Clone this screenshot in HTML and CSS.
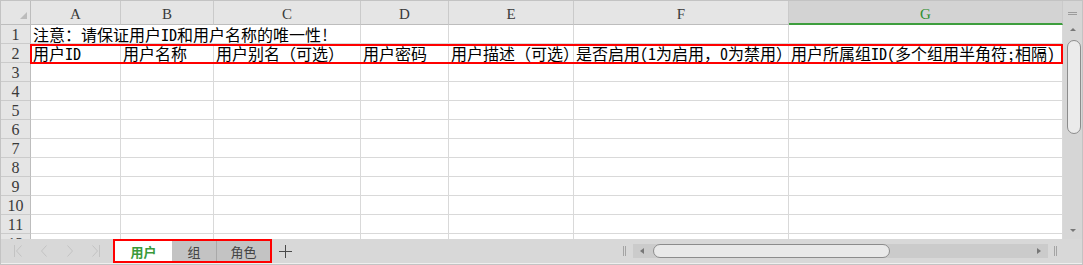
FILE: index.html
```html
<!DOCTYPE html>
<html>
<head>
  <meta charset="utf-8">
  <title>用户导入模板</title>
  <link rel="stylesheet" href="styles.css">
</head>
<body>
  <div class="app">
    <div class="main">
      <div class="grid">
        <!-- column headers -->
        <div class="corner"><span class="tri"></span></div>
        <div class="ch">A</div>
        <div class="ch">B</div>
        <div class="ch">C</div>
        <div class="ch">D</div>
        <div class="ch">E</div>
        <div class="ch">F</div>
        <div class="ch sel">G</div>

        <!-- row 1: note overflows into B and C -->
        <div class="rh">1</div>
        <div class="cell span3">注意：请保证用户ID和用户名称的唯一性!</div>
        <div class="cell"></div><div class="cell"></div><div class="cell"></div><div class="cell"></div>

        <!-- row 2: field names -->
        <div class="rh">2</div>
        <div class="cell">用户ID</div>
        <div class="cell">用户名称</div>
        <div class="cell">用户别名（可选）</div>
        <div class="cell">用户密码</div>
        <div class="cell">用户描述（可选）</div>
        <div class="cell">是否启用(1为启用，0为禁用）</div>
        <div class="cell">用户所属组ID(多个组用半角符;相隔)</div>

        <div class="rh">3</div><div class="cell"></div><div class="cell"></div><div class="cell"></div><div class="cell"></div><div class="cell"></div><div class="cell"></div><div class="cell"></div>
        <div class="rh">4</div><div class="cell"></div><div class="cell"></div><div class="cell"></div><div class="cell"></div><div class="cell"></div><div class="cell"></div><div class="cell"></div>
        <div class="rh">5</div><div class="cell"></div><div class="cell"></div><div class="cell"></div><div class="cell"></div><div class="cell"></div><div class="cell"></div><div class="cell"></div>
        <div class="rh">6</div><div class="cell"></div><div class="cell"></div><div class="cell"></div><div class="cell"></div><div class="cell"></div><div class="cell"></div><div class="cell"></div>
        <div class="rh">7</div><div class="cell"></div><div class="cell"></div><div class="cell"></div><div class="cell"></div><div class="cell"></div><div class="cell"></div><div class="cell"></div>
        <div class="rh">8</div><div class="cell"></div><div class="cell"></div><div class="cell"></div><div class="cell"></div><div class="cell"></div><div class="cell"></div><div class="cell"></div>
        <div class="rh">9</div><div class="cell"></div><div class="cell"></div><div class="cell"></div><div class="cell"></div><div class="cell"></div><div class="cell"></div><div class="cell"></div>
        <div class="rh">10</div><div class="cell"></div><div class="cell"></div><div class="cell"></div><div class="cell"></div><div class="cell"></div><div class="cell"></div><div class="cell"></div>
        <div class="rh">11</div><div class="cell"></div><div class="cell"></div><div class="cell"></div><div class="cell"></div><div class="cell"></div><div class="cell"></div><div class="cell"></div>
        <div class="rh">12</div><div class="cell"></div><div class="cell"></div><div class="cell"></div><div class="cell"></div><div class="cell"></div><div class="cell"></div><div class="cell"></div>
      </div>

      <div class="vscroll">
        <div class="grip-h"></div>
        <div class="arrow-up"></div>
        <div class="vthumb"></div>
        <div class="arrow-down"></div>
      </div>

      <!-- highlight around row 2 -->
      <div class="selbox"></div>
    </div>

    <div class="bar">
      <div class="nav">
        <svg width="10" height="12" viewBox="0 0 10 12"><path d="M1.5 0v12M8.5 0.5L3.5 6l5 5.5" fill="none" stroke="#c3c3c3"/></svg>
        <svg width="10" height="12" viewBox="0 0 10 12"><path d="M7.5 0.5L2.5 6l5 5.5" fill="none" stroke="#c3c3c3"/></svg>
        <svg width="10" height="12" viewBox="0 0 10 12"><path d="M2.5 0.5L7.5 6l-5 5.5" fill="none" stroke="#c3c3c3"/></svg>
        <svg width="10" height="12" viewBox="0 0 10 12"><path d="M1.5 0.5L6.5 6l-5 5.5M8.5 0v12" fill="none" stroke="#c3c3c3"/></svg>
      </div>

      <div class="tabs">
        <div class="tab active">用户</div>
        <div class="tab t2">组</div>
        <div class="tab t3">角色</div>
      </div>

      <svg class="add" width="13" height="13" viewBox="0 0 13 13"><path d="M6.5 0v13M0 6.5h13" stroke="#4a4a4a"/></svg>

      <div class="hscroll">
        <div class="grip-v"></div>
        <div class="track">
          <span class="arrow-left"></span>
          <span class="hthumb"></span>
          <span class="arrow-right"></span>
        </div>
        <div class="grip-v"></div>
      </div>
    </div>
  </div>
</body>
</html>
```

FILE: styles.css
```css
/* spreadsheet frame */
body {
  margin: 0;
  background: #fff;
}

.app {
  width: 1083px;
  height: 265px;
  box-sizing: border-box;
  border: 1px solid #c3c3c3;
  display: flex;
  flex-direction: column;
  overflow: hidden;
}

.main {
  position: relative;
  display: flex;
  height: 238px;
}

.grid {
  display: grid;
  grid-template-columns: 30px 90px 93px 147px 88px 125px 215px 274px;
  grid-template-rows: 24px;
  grid-auto-rows: 19px;
  height: 238px;
  overflow: hidden;
}

.corner,
.ch,
.rh {
  background: #e5e5e5;
  box-sizing: border-box;
  color: #3a3a3a;
  font-family: "Liberation Serif", serif;
}

.corner {
  border-right: 1px solid #bdbdbd;
  border-bottom: 1px solid #bdbdbd;
  display: flex;
  justify-content: flex-end;
  align-items: flex-end;
}

.corner .tri {
  width: 0;
  height: 0;
  border-left: 7px solid transparent;
  border-bottom: 7px solid #bcbcbc;
  margin: 0 3px 5px 0;
}

.ch {
  border-right: 1px solid #cacaca;
  border-bottom: 1px solid #bdbdbd;
  text-align: center;
  font-size: 15px;
  line-height: 26px;
}

.ch.sel {
  background: #d3d3d3;
  color: #2f8f2f;
  border-bottom: 2px solid #3d9e3d;
}

.rh {
  border-right: 1px solid #bdbdbd;
  border-bottom: 1px solid #cbcbcb;
  text-align: center;
  font-size: 16px;
  line-height: 20px;
}

.cell {
  box-sizing: border-box;
  border-right: 1px solid #d9d9d9;
  border-bottom: 1px solid #d9d9d9;
  padding-left: 2px;
  font-family: "Noto Sans Mono CJK SC", "Noto Sans CJK SC", sans-serif;
  font-size: 16px;
  line-height: 18px;
  color: #000;
  white-space: nowrap;
}

.span3 {
  grid-column: span 3;
}

.selbox {
  position: absolute;
  left: 29px;
  top: 43px;
  width: 1033px;
  height: 20px;
  box-sizing: border-box;
  border: 2px solid #f00;
  pointer-events: none;
}

/* vertical scrollbar */
.vscroll {
  width: 19px;
  background: #d6d6d6;
  display: flex;
  flex-direction: column;
  align-items: center;
}

.grip-h {
  width: 9px;
  height: 1px;
  margin-top: 11px;
  border-top: 1px solid #9c9c9c;
  border-bottom: 1px solid #9c9c9c;
}

.arrow-up,
.arrow-down {
  width: 0;
  height: 0;
  border-left: 3px solid transparent;
  border-right: 3px solid transparent;
}

.arrow-up {
  margin-top: 13px;
  border-bottom: 3px solid #777;
}

.arrow-down {
  margin-top: auto;
  margin-bottom: 7px;
  border-top: 3px solid #777;
}

.vthumb {
  width: 14px;
  height: 94px;
  margin-top: 9px;
  margin-left: 2px;
  box-sizing: border-box;
  border: 1px solid #8c8c8c;
  border-radius: 7px;
  background: #ebebeb;
}

/* sheet tabs bar */
.bar {
  height: 25px;
  box-sizing: border-box;
  background: #d8d8d8;
  border-bottom: 1px solid #efefef;
  display: flex;
  align-items: center;
}

.nav {
  width: 112px;
  box-sizing: border-box;
  padding-left: 12px;
  display: flex;
  gap: 16px;
}

.tabs {
  align-self: stretch;
  display: flex;
  border: 2px solid #f00;
  font-family: "Noto Sans CJK SC", sans-serif;
  font-size: 13px;
  color: #444;
}

.tab {
  display: flex;
  align-items: center;
  justify-content: center;
  background: #c3c3c3;
}

.tab.active {
  width: 57px;
  background: #fff;
  color: #3a9a3a;
  font-weight: bold;
}

.tab.t2 {
  width: 44px;
  border-right: 1px solid #a9a9a9;
}

.tab.t3 {
  width: 53px;
}

.add {
  margin-left: 7px;
}

/* horizontal scrollbar */
.hscroll {
  margin-left: auto;
  padding-right: 25px;
  display: flex;
  align-items: center;
}

.grip-v {
  width: 1px;
  height: 10px;
  border-left: 1px solid #a4a4a4;
  border-right: 1px solid #a4a4a4;
}

.track {
  width: 415px;
  height: 14px;
  margin: 0 6px 0 7px;
  background: #cbcbcb;
  display: flex;
  align-items: center;
}

.arrow-left,
.arrow-right {
  width: 0;
  height: 0;
  border-top: 3px solid transparent;
  border-bottom: 3px solid transparent;
}

.arrow-left {
  margin-left: 7px;
  border-right: 4px solid #777;
}

.arrow-right {
  margin-left: auto;
  margin-right: 7px;
  border-left: 4px solid #777;
}

.hthumb {
  width: 237px;
  height: 14px;
  margin-left: 9px;
  box-sizing: border-box;
  border: 1px solid #8c8c8c;
  border-radius: 7px;
  background: #e9e9e9;
}
```
